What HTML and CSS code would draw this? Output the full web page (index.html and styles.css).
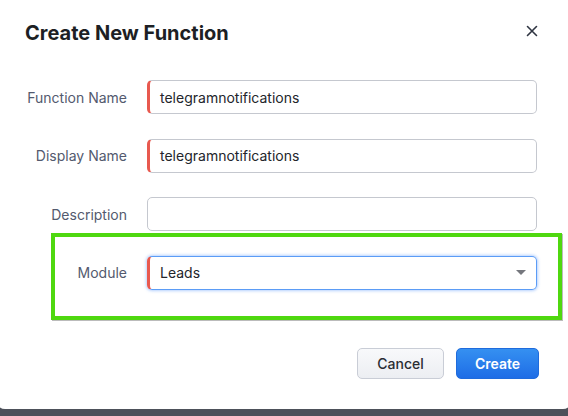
FILE: index.html
```html
<!DOCTYPE html>
<html>
<head>
<meta charset="utf-8">
<link rel="stylesheet" href="styles.css">
</head>
<body>
<div class="dialog">
  <div class="header">
    <h1 class="title">Create New Function</h1>
    <svg class="close" width="12" height="12" viewBox="0 0 12 12"><path d="M1.5 1.5 L10.5 10.5 M10.5 1.5 L1.5 10.5" stroke="#2f3542" stroke-width="1.6" stroke-linecap="round"/></svg>
  </div>
  <div class="form">
    <div class="row">
      <label class="label">Function Name</label>
      <div class="field required">telegramnotifications</div>
    </div>
    <div class="row">
      <label class="label">Display Name</label>
      <div class="field required">telegramnotifications</div>
    </div>
    <div class="row">
      <label class="label">Description</label>
      <div class="field"></div>
    </div>
    <div class="highlight">
      <div class="row">
        <label class="label label-short">Module</label>
        <div class="field required select">
          <span>Leads</span>
          <span class="caret"></span>
        </div>
      </div>
    </div>
  </div>
  <div class="footer">
    <button class="btn btn-cancel">Cancel</button>
    <button class="btn btn-create">Create</button>
  </div>
</div>
</body>
</html>
```
FILE: styles.css
```css
* { box-sizing: border-box; }
html, body { margin: 0; padding: 0; }
body {
  background: #4d515a;
  width: 568px;
  height: 416px;
  overflow: hidden;
  font-family: Inter, "Liberation Sans", sans-serif;
}
.dialog {
  width: 576px;
  height: 409px;
  margin-left: -4px;
  background: #ffffff;
  border-radius: 0 0 9px 9px;
  padding-left: 29px;
  padding-right: 33px;
}
.header {
  display: flex;
  justify-content: space-between;
  align-items: center;
  height: 66px;
  padding-right: 1px;
}
.title {
  margin: 0;
  font-size: 20px;
  font-weight: 700;
  color: #1d1f24;
  letter-spacing: 0;
}
.close {
  margin-top: -4px;
  margin-right: 0;
}
.form {
  display: flex;
  flex-direction: column;
  padding-top: 14px;
}
.row {
  display: flex;
  align-items: center;
  gap: 20px;
  margin-bottom: 24.5px;
}
.label {
  width: 102px;
  text-align: right;
  font-size: 14px;
  color: #535a6e;
}
.field {
  width: 390px;
  height: 34px;
  border: 1px solid #c5c8cf;
  border-radius: 5px;
  display: flex;
  align-items: center;
  padding-left: 12px;
  font-size: 14px;
  color: #23252b;
}
.field.required {
  border-left: 3px solid #e8594f;
  padding-left: 10px;
}
.highlight {
  margin-left: 26px;
  width: 511px;
  height: 87px;
  margin-top: -23px;
  border: 4px solid #4fd80f;
  padding: 19px 21px 0 0;
  box-shadow: 1px 1px 0 rgba(60,60,60,0.35);
}
.highlight .row { margin-bottom: 0; }
.label-short { width: 72px; }
.select {
  border-color: #5b9cf6;
  border-left-color: #e8594f;
  box-shadow: 0 0 3px 1px rgba(90,150,250,0.45);
  justify-content: space-between;
  padding-right: 10px;
}
.caret {
  width: 0;
  height: 0;
  border-left: 5px solid transparent;
  border-right: 5px solid transparent;
  border-top: 5px solid #75777d;
}
.footer {
  display: flex;
  justify-content: flex-end;
  gap: 12px;
  padding-top: 28px;
  padding-right: 0;
}
.btn {
  height: 31px;
  border-radius: 5px;
  font-family: Inter, "Liberation Sans", sans-serif;
  font-size: 14px;
  font-weight: 500;
  padding: 0;
}
.btn-cancel {
  width: 87px;
  background: linear-gradient(#f8f9fb, #eceef2);
  border: 1px solid #c9cdd6;
  color: #2a2d33;
}
.btn-create {
  width: 83px;
  background: linear-gradient(#3590f1, #1e6de6);
  border: 1px solid #1f6bdc;
  color: #ffffff;
  font-weight: 600;
}
```
